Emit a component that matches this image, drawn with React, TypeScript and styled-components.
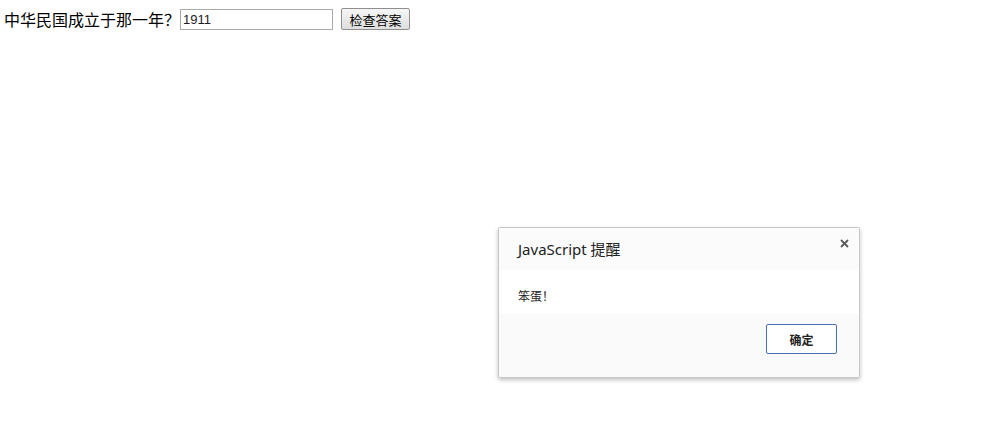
import styled, { createGlobalStyle } from 'styled-components';

const GlobalStyle = createGlobalStyle`
  html, body {
    margin: 0;
    padding: 0;
    background: #ffffff;
  }
  body {
    font-family: "Noto Sans CJK SC", "Liberation Sans", sans-serif;
    color: #000000;
  }
`;

export default function App() {
  return (
    <>
      <GlobalStyle />
      <Page>
        <QuizRow>
          <Question>中华民国成立于那一年？</Question>
          <AnswerInput defaultValue="1911" />
          <CheckButton>检查答案</CheckButton>
        </QuizRow>

        <AlertDialog>
          <DialogHeader>
            <DialogTitle>JavaScript 提醒</DialogTitle>
            <CloseButton aria-label="close">
              <svg width="9" height="9" viewBox="0 0 9 9">
                <path d="M1 1 L8 8 M8 1 L1 8" stroke="#5a5a5a" strokeWidth="1.8" />
              </svg>
            </CloseButton>
          </DialogHeader>
          <DialogBody>笨蛋！</DialogBody>
          <DialogFooter>
            <OkButton>确定</OkButton>
          </DialogFooter>
        </AlertDialog>
      </Page>
    </>
  );
}

const Page = styled.div`
  position: relative;
  width: 996px;
  height: 445px;
  padding: 8px 4px;
  box-sizing: border-box;
`;

const QuizRow = styled.div`
  display: flex;
  align-items: center;
  height: 22px;
`;

const Question = styled.span`
  font-size: 16px;
  line-height: 22px;
`;

const AnswerInput = styled.input`
  width: 153px;
  height: 21px;
  box-sizing: border-box;
  border: 1px solid #a9a9a9;
  padding: 1px 2px;
  font-family: "Liberation Sans", Arial, sans-serif;
  font-size: 13px;
  color: #1a1a2a;
  outline: none;
`;

const CheckButton = styled.button`
  margin-left: 8px;
  width: 69px;
  height: 22px;
  box-sizing: border-box;
  border: 1px solid #8f8f8f;
  border-radius: 2px;
  background: linear-gradient(#f6f6f6, #dedede);
  font-family: "Noto Sans CJK SC", sans-serif;
  font-size: 13px;
  padding: 0;
  color: #000;
`;

const AlertDialog = styled.div`
  position: absolute;
  left: 498px;
  top: 227px;
  width: 362px;
  height: 151px;
  box-sizing: border-box;
  border: 1px solid #c8c8c8;
  border-radius: 2px;
  background: #ffffff;
  box-shadow: 0 2px 4px rgba(0, 0, 0, 0.25);
  display: flex;
  flex-direction: column;
  font-family: "Noto Sans", "Noto Sans CJK SC", sans-serif;
`;

const DialogHeader = styled.div`
  position: relative;
  height: 42px;
  background: #fbfbfb;
  padding: 11px 0 0 19px;
  box-sizing: border-box;
`;

const DialogTitle = styled.div`
  font-size: 15px;
  line-height: 20px;
  color: #222;
`;

const CloseButton = styled.span`
  position: absolute;
  right: 10px;
  top: 11px;
  display: flex;
`;

const DialogBody = styled.div`
  height: 44px;
  padding: 18px 0 0 19px;
  box-sizing: border-box;
  font-family: "Noto Sans CJK SC", sans-serif;
  font-size: 12px;
  line-height: 16px;
  color: #222;
`;

const DialogFooter = styled.div`
  flex: 1;
  background: #fafafa;
  display: flex;
  justify-content: flex-end;
  align-items: flex-start;
  padding: 10px 22px 0 0;
`;

const OkButton = styled.button`
  width: 71px;
  height: 30px;
  box-sizing: border-box;
  border: 1px solid #4a6db5;
  border-radius: 2px;
  background: #ffffff;
  font-family: "Noto Sans CJK SC", sans-serif;
  font-weight: bold;
  font-size: 12px;
  color: #222;
  padding: 0;
`;
